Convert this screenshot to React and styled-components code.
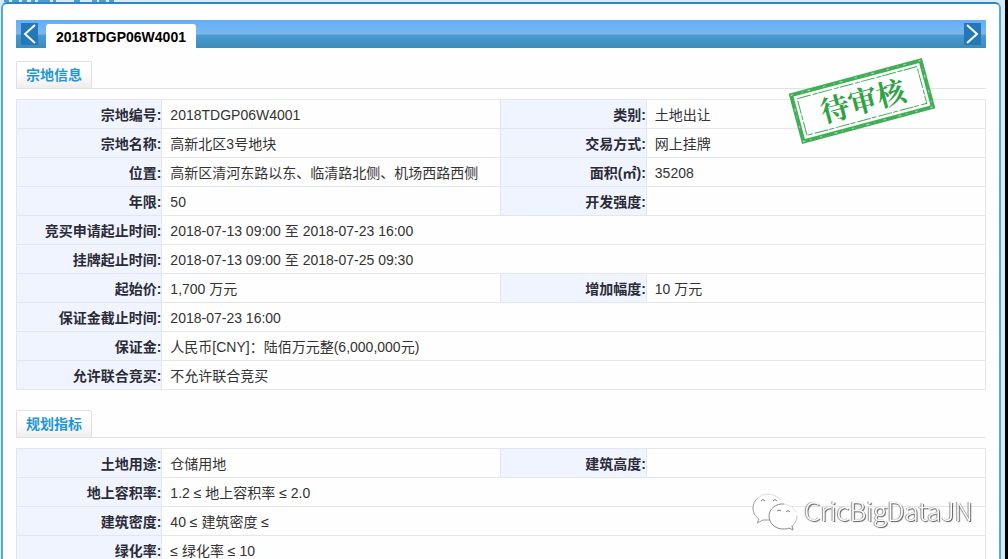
import { createGlobalStyle, styled } from "styled-components";

const GlobalStyle = createGlobalStyle`
  * {
    box-sizing: border-box;
  }

  body {
    margin: 0;
    height: 100vh;
    overflow: hidden;
    background: #000;
    font-family: "Liberation Sans", "Noto Sans CJK SC", sans-serif;
    font-size: 14px;
    line-height: 20px;
    color: #333;
  }
`;

const Page = styled.div`
  height: 100vh;
  margin-right: 3px;
  display: flex;
  flex-direction: column;
  background: #d5edfb;
  overflow: hidden;
`;

const PageTop = styled.div`
  height: 2px;
  flex: none;

  svg {
    display: block;
  }
`;

const Panel = styled.main`
  position: relative;
  flex: 1 0 auto;
  margin: 0 4px 0 1px;
  padding: 16px 13px 0;
  border: 2px solid #2f86c4;
  border-color: #2f86c4 #5aaac8;
  border-bottom: none;
  border-radius: 6px 6px 0 0;
  background: #fefefe;
`;

const TabBar = styled.nav`
  display: flex;
  align-items: flex-start;
  height: 28px;
  padding: 3px 5px 0;
  background: linear-gradient(#62aef8, #7ab8ec 50%, #4a9ad4 54%, #3d8cb8);
`;

const ArrowButton = styled.button`
  width: 17px;
  height: 22px;
  padding: 0;
  border: 0;
  background: #2478b8;
  margin-left: ${(props) => (props.$end ? "auto" : 0)};

  svg {
    display: block;
  }
`;

const Tab = styled.a`
  margin: 1px 0 0 8px;
  height: 24px;
  padding: 0 10px;
  border-radius: 3px 3px 0 0;
  background: #fefefe;
  color: #000;
  font-weight: 700;
  line-height: 26px;
  text-decoration: none;
`;

const SectionHead = styled.header`
  display: flex;
  margin-top: ${(props) => (props.$first ? "13px" : "20px")};
  margin-bottom: 10px;
  border-bottom: 1px solid #e2e2e2;
`;

const SectionTitle = styled.h2`
  margin: 0;
  height: 27px;
  padding: 0 9px;
  border: 1px solid #e0e0e0;
  border-bottom: none;
  border-radius: 2px 2px 0 0;
  background: linear-gradient(#fff 40%, #eee);
  color: #1e96d6;
  font-size: 14px;
  line-height: 27px;
`;

const InfoTable = styled.table`
  width: 100%;
  table-layout: fixed;
  border-collapse: collapse;

  th,
  td {
    height: 29px;
    padding: 2px 0 0;
    border: 1px solid #e3e6ec;
  }

  th {
    background: #f0f4ff;
    text-align: right;
    color: #2b2b38;
  }

  td {
    padding-left: 8px;
  }
`;

const Stamp = styled.div`
  position: absolute;
  top: 52px;
  right: 62px;
  width: 150px;
  height: 90px;

  svg {
    display: block;
  }
`;

const StampText = styled.text`
  font-family: "Noto Serif CJK SC", "Noto Sans CJK SC", serif;
  font-size: 29px;
  font-weight: 700;
  fill: #2fa344;
`;

const Watermark = styled.div`
  position: fixed;
  right: 35px;
  bottom: 27px;
  display: flex;
  align-items: flex-start;
  gap: 6px;
  color: #fff;
  font-family: "Noto Sans CJK SC", sans-serif;
  font-size: 26px;
  font-weight: 300;
  line-height: 36px;
  text-shadow: 1px 1px 1px #555, -1px 0 1px #888;
`;

function Arrow({ points }) {
  return (
    <svg width="17" height="22" viewBox="0 0 17 22" fill="none">
      <polyline points={points} stroke="#fff" strokeWidth="2" />
    </svg>
  );
}

function WechatLogo() {
  return (
    <svg width="46" height="40" viewBox="0 0 46 40" fill="#fff">
      <path d="M16 2C8 2 1 8 1 16c0 5 2 8 6 11l-2 4 6-3c2 1 4 1 7 1 7 0 13-5 13-13S24 2 16 2z" />
      <g fill="none" stroke="#999" strokeLinecap="round">
        <path d="M6 6C3 8 1 12 1 16c0 5 2 8 6 11l-2 4 6-3h6" />
        <path d="M6 6q4-4 10-4t12 5" stroke="#ddd" />
      </g>
      <path d="M31 12c-8 0-14 5-14 12s6 13 14 13c2 0 4 0 6-1l4 2-1-4c3-2 5-6 5-10 0-7-6-12-14-12z" />
      <g fill="none" stroke="#888" strokeLinecap="round">
        <path d="M32 12c-8-1-15 5-15 12s6 13 14 13c2 0 4 0 6-1l4 2-1-4" />
        <path d="M40 34c3-2 5-6 5-10" stroke="#bbb" />
        <path d="M32 12q9 1 12 8" stroke="#e2e2e2" />
      </g>
      <g fill="none" stroke="#777">
        <path d="M9 9q2-3 4 0M21 9q2-3 4 0M25 19q2-2 4 0M34 20q2-3 4 0" />
      </g>
    </svg>
  );
}

const landRows = [
  [["宗地编号:", "2018TDGP06W4001"], ["类别:", "土地出让"]],
  [["宗地名称:", "高新北区3号地块"], ["交易方式:", "网上挂牌"]],
  [
    ["位置:", "高新区清河东路以东、临清路北侧、机场西路西侧"],
    ["面积(㎡):", "35208"],
  ],
  [["年限:", "50"], ["开发强度:", ""]],
  [["竞买申请起止时间:", "2018-07-13 09:00 至 2018-07-23 16:00"]],
  [["挂牌起止时间:", "2018-07-13 09:00 至 2018-07-25 09:30"]],
  [["起始价:", "1,700 万元"], ["增加幅度:", "10 万元"]],
  [["保证金截止时间:", "2018-07-23 16:00"]],
  [["保证金:", "人民币[CNY]：陆佰万元整(6,000,000元)"]],
  [["允许联合竞买:", "不允许联合竞买"]],
];

const planRows = [
  [["土地用途:", "仓储用地"], ["建筑高度:", ""]],
  [["地上容积率:", "1.2 ≤ 地上容积率 ≤ 2.0"]],
  [["建筑密度:", "40 ≤ 建筑密度 ≤"]],
  [["绿化率:", "≤ 绿化率 ≤ 10"]],
];

function Section({ title, rows, first }) {
  return (
    <section>
      <SectionHead $first={first}>
        <SectionTitle>{title}</SectionTitle>
      </SectionHead>
      <InfoTable aria-label={title}>
        <colgroup>
          <col width="15%" />
          <col width="35%" />
          <col width="15%" />
          <col width="35%" />
        </colgroup>
        <tbody>
          {rows.map((row) => (
            <tr key={row[0][0]}>
              {row.map(([label, value]) => [
                <th key={label} scope="row">
                  {label}
                </th>,
                <td key={`${label}-value`} colSpan={row.length === 1 ? 3 : 1}>
                  {value}
                </td>,
              ])}
            </tr>
          ))}
        </tbody>
      </InfoTable>
    </section>
  );
}

function ReviewStamp() {
  return (
    <Stamp>
      <svg width="150" height="90" viewBox="0 0 150 90">
        <g transform="rotate(-15 75 45)">
          <rect x="8" y="21" width="134" height="48" fill="#fefefe" />
          <g fill="none" stroke="#3fae55">
            <rect x="8" y="21" width="134" height="48" strokeWidth="4" />
            <rect
              x="13"
              y="26"
              width="124"
              height="38"
              strokeDasharray="14 2 5 1"
            />
          </g>
          {/* worn ink on the frame */}
          <rect
            x="8"
            y="21"
            width="134"
            height="48"
            fill="none"
            stroke="#b5e2bd"
            strokeDasharray="2 9 1 5 3 13"
          />
          <StampText x="76" y="56" textAnchor="middle">
            待审核
          </StampText>
        </g>
      </svg>
    </Stamp>
  );
}

function App() {
  return (
    <>
      <GlobalStyle />
      <Page>
        <PageTop>
          <svg width="120" height="2" viewBox="0 0 120 2">
            <path
              d="M4 1h5M12 1h7M22 1h5M31 1h4M38 1h12M53 1h3M74 1h6M92 1h5M99 1h7M109 1h5"
              stroke="#4b9fc9"
              strokeWidth="2"
            />
          </svg>
        </PageTop>
        <Panel>
          <TabBar>
            <ArrowButton aria-label="上一个">
              <Arrow points="14,2 4,11 14,20" />
            </ArrowButton>
            <Tab href="#land">2018TDGP06W4001</Tab>
            <ArrowButton $end aria-label="下一个">
              <Arrow points="3,2 13,11 3,20" />
            </ArrowButton>
          </TabBar>
          <Section title="宗地信息" rows={landRows} first />
          <Section title="规划指标" rows={planRows} />
          <ReviewStamp />
        </Panel>
      </Page>
      <Watermark>
        <WechatLogo />
        CricBigDataJN
      </Watermark>
    </>
  );
}

export default App;
